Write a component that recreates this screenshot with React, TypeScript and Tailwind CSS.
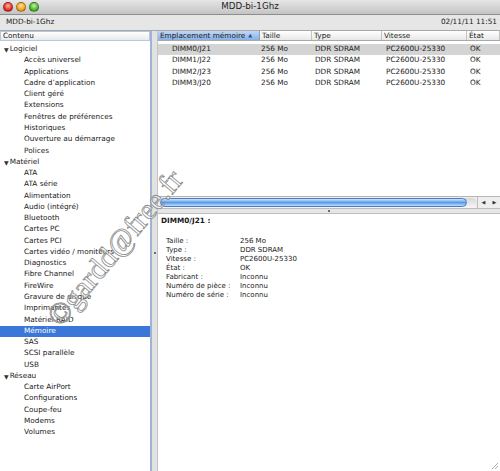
import React from "react";

type Node = { label: string; children: string[] };

const tree: Node[] = [
  {
    label: "Logiciel",
    children: [
      "Accès universel",
      "Applications",
      "Cadre d’application",
      "Client géré",
      "Extensions",
      "Fenêtres de préférences",
      "Historiques",
      "Ouverture au démarrage",
      "Polices",
    ],
  },
  {
    label: "Matériel",
    children: [
      "ATA",
      "ATA série",
      "Alimentation",
      "Audio (intégré)",
      "Bluetooth",
      "Cartes PC",
      "Cartes PCI",
      "Cartes vidéo / moniteurs",
      "Diagnostics",
      "Fibre Channel",
      "FireWire",
      "Gravure de disque",
      "Imprimantes",
      "Matériel RAID",
      "Mémoire",
      "SAS",
      "SCSI parallèle",
      "USB",
    ],
  },
  {
    label: "Réseau",
    children: ["Carte AirPort", "Configurations", "Coupe-feu", "Modems", "Volumes"],
  },
];

const slots = ["DIMM0/J21", "DIMM1/J22", "DIMM2/J23", "DIMM3/J20"];

const details: [string, string][] = [
  ["Taille :", "256 Mo"],
  ["Type :", "DDR SDRAM"],
  ["Vitesse :", "PC2600U-25330"],
  ["État :", "OK"],
  ["Fabricant :", "Inconnu"],
  ["Numéro de pièce :", "Inconnu"],
  ["Numéro de série :", "Inconnu"],
];

const cols = "grid grid-cols-[102px_52px_70px_85px_1fr]";

function Light({ color }: { color: string }) {
  return <div className={`h-[10px] w-[10px] rounded-full border border-black/30 ${color}`} />;
}

export default function App() {
  return (
    <div className="relative flex h-[471px] w-[500px] flex-col overflow-hidden bg-white font-['DejaVu_Sans',sans-serif] text-[7.3px] text-[#1a1a1a]">
      {/* title bar */}
      <div className="flex h-[14px] items-center bg-linear-to-b from-[#e6e6e6] to-[#c4c4c4] px-[3px]">
        <div className="flex w-[60px] gap-[3px]">
          <Light color="bg-[radial-gradient(circle_at_50%_35%,#ffb3a8,#e0332a_60%,#9c1a12)]" />
          <Light color="bg-[radial-gradient(circle_at_50%_35%,#ffe4a0,#f0a320_60%,#a8660a)]" />
          <Light color="bg-[radial-gradient(circle_at_50%_35%,#c8f0a8,#4fb82e_60%,#2a7414)]" />
        </div>
        <div className="flex-1 text-center text-[8.7px] text-[#222]">MDD-bi-1Ghz</div>
        <div className="w-[60px]" />
      </div>
      {/* toolbar */}
      <div className="flex h-[17px] items-center justify-between border-t border-[#8e8e8e] border-b border-b-[#a8a8a8] bg-[#e6e6e6] pl-[6px] pr-[3px]">
        <span>MDD-bi-1Ghz</span>
        <span>02/11/11 11:51</span>
      </div>

      <div className="flex flex-1">
        {/* sidebar */}
        <div className="flex w-[152px] flex-col border-r-2 border-[#9fb3d2] bg-white">
          <div className="flex h-[10px] items-center border border-[#b7c7e2] bg-linear-to-b from-white to-[#e9e9e9] pl-[2px] leading-none">
            Contenu
          </div>
          <div className="pt-[3px]">
            {tree.map((n) => (
              <div key={n.label}>
                <div className="flex h-[11.27px] items-center pl-[4px]">
                  <span className="mr-[1px] text-[6px] text-[#333]">▼</span>
                  {n.label}
                </div>
                {n.children.map((c) => (
                  <div
                    key={c}
                    className={`flex h-[11.27px] items-center pl-[24px] ${
                      c === "Mémoire" ? "bg-[#3a77d8] text-white" : ""
                    }`}
                  >
                    {c}
                  </div>
                ))}
              </div>
            ))}
          </div>
        </div>
        {/* vertical splitter */}
        <div className="relative w-[6px] border-r border-[#c4c4c4] bg-[#e2e2e2]">
          <div className="absolute left-[2px] top-[221px] h-[2px] w-[2px] rounded-full bg-[#444]" />
        </div>

        {/* right pane */}
        <div className="flex flex-1 flex-col">
          <div className="flex h-[165px] flex-col">
            <div className={`${cols} h-[10px] border-b border-[#a9a9a9] leading-none`}>
              <div className="flex items-center border-r border-[#7f9fcf] bg-linear-to-b from-[#c2d8f4] to-[#86b0e6] pl-[2px]">
                <span>Emplacement mémoire</span>
                <span className="ml-[3px] text-[5px] text-[#1f4f9a]">▲</span>
              </div>
              {["Taille", "Type", "Vitesse", "État"].map((h) => (
                <div
                  key={h}
                  className="flex items-center border-r border-[#c2c2c2] bg-linear-to-b from-white to-[#e8e8e8] pl-[2px]"
                >
                  {h}
                </div>
              ))}
            </div>
            <div className="pt-[3px]">
              {slots.map((s, i) => (
                <div
                  key={s}
                  className={`${cols} h-[11.27px] items-center ${i === 0 ? "bg-[#d4d4d4]" : ""}`}
                >
                  <span className="pl-[14px]">{s}</span>
                  <span className="pl-[1px]">256 Mo</span>
                  <span className="pl-[3px]">DDR SDRAM</span>
                  <span className="pl-[4px]">PC2600U-25330</span>
                  <span className="pl-[3px]">OK</span>
                </div>
              ))}
            </div>
          </div>

          {/* horizontal scrollbar */}
          <div className="flex h-[12px] items-center border-t border-[#b5b5b5] bg-[#eeeeee]">
            <div className="flex h-[10px] flex-1 items-center rounded-full bg-linear-to-b from-[#d7d7d7] to-[#f7f7f7] pl-[2px]">
              <div className="h-[9px] w-[307px] rounded-full border border-[#4a7bc4] bg-linear-to-b from-[#d2e6fb] via-[#5a9be8] to-[#bcdcfb]" />
            </div>
            <div className="flex h-full w-[23px] items-center justify-around border-l border-[#bdbdbd] text-[5px] text-[#333]">
              <span>◀</span>
              <span>▶</span>
            </div>
          </div>
          {/* horizontal splitter */}
          <div className="flex h-[6px] items-center justify-center border-y border-[#bdbdbd] bg-[#e6e6e6]">
            <div className="h-[2px] w-[2px] rounded-full bg-[#444]" />
          </div>

          {/* details */}
          <div className="flex-1 pl-[3px] pt-[1px]">
            <div className="font-bold leading-[11px]">DIMM0/J21 :</div>
            <div className="pl-[5px] pt-[11px] text-[7px]">
              {details.map(([k, v]) => (
                <div key={k} className="flex h-[9px] items-center">
                  <span className="w-[74px]">{k}</span>
                  <span>{v}</span>
                </div>
              ))}
            </div>
          </div>
        </div>
      </div>

      {/* resize grip */}
      <svg className="absolute bottom-[1px] right-[1px]" width="9" height="9" viewBox="0 0 9 9">
        <path d="M8 2 L2 8 M8 5 L5 8" stroke="#9a9a9a" strokeWidth="0.8" />
      </svg>

      {/* watermark */}
      <div className="pointer-events-none absolute left-[18px] top-[225px] -rotate-[50deg] font-['Liberation_Serif',serif] text-[30px] text-white/50 [-webkit-text-stroke:0.8px_#8c8c8c]">
        ©gardd@free.fr
      </div>
    </div>
  );
}
